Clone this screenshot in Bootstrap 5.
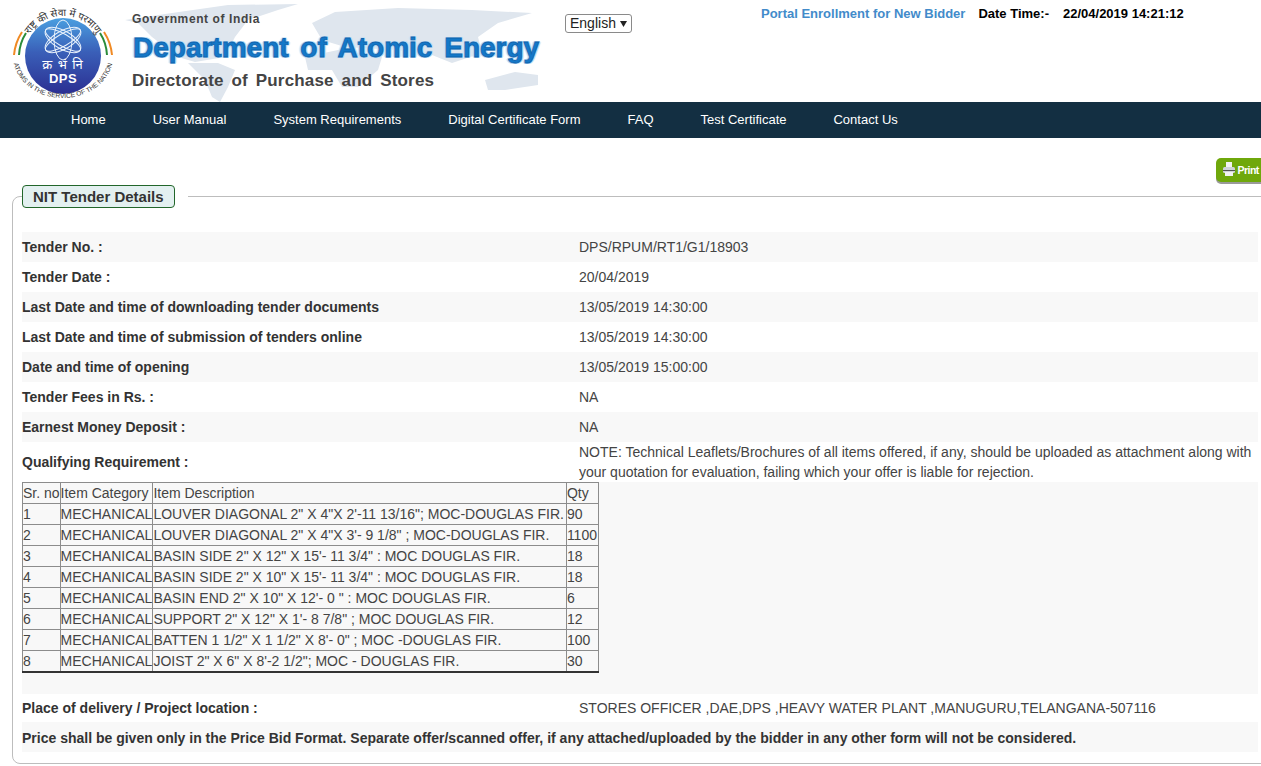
<!DOCTYPE html>
<html lang="en">
<head>
  <meta charset="UTF-8" />
  <meta name="viewport" content="width=device-width, initial-scale=1.0" />
  <title>NIT Tender Details</title>
  <link href="https://cdn.jsdelivr.net/npm/bootstrap@5.3.0/dist/css/bootstrap.min.css" rel="stylesheet" />
  <style>
    body { font-family: "Liberation Sans", Arial, sans-serif; font-size: 14px; color: #333; overflow-x: hidden; }
    .top-head { height: 102px; }
    .logo-box { width: 130px; padding: 5px 0 0 10px; flex: none; }
    .banner { width: 435px; height: 102px; flex: none; position: relative; }
    .banner-map { position: absolute; left: -20px; top: 0; }
    .banner-text { position: relative; padding-top: 12px; }
    .gov-line { font: bold 12px/14px "Liberation Sans", sans-serif; color: #444; letter-spacing: .6px; margin-left: 2px; }
    .dept-line { font: bold 28px/34px "Liberation Sans", sans-serif; color: #1478c8; word-spacing: 4px; white-space: nowrap; margin: 5px 0 0 3px;
      -webkit-text-stroke: .8px #0f63ad; text-shadow: 1px 1px 0 #b7d9f3, -1px -1px 0 #b7d9f3, 1px -1px 0 #b7d9f3, -1px 1px 0 #b7d9f3, 2px 0 1px #cfe4f6, -2px 0 1px #cfe4f6; }
    .dir-line { font: bold 17px/20px "Liberation Sans", sans-serif; color: #444; letter-spacing: .17px; word-spacing: 3px; margin: 6px 0 0 2px; white-space: nowrap; }
    .lang-box { margin: 13px 0 0 0; flex: none; }
    .lang-box select { font: 14px "Liberation Sans", sans-serif; width: 67px; height: 19px; padding: 0 0 0 4px; color: #222; border: 1px solid #8a8a8a; border-radius: 3px; appearance: none;
      background: #fff url("data:image/svg+xml,%3Csvg xmlns='http://www.w3.org/2000/svg' width='7' height='6'%3E%3Cpath d='M0 0h7L3.5 6z' fill='%23222'/%3E%3C/svg%3E") no-repeat 54px 6px; }
    .top-right { margin: 4px 0 0 129px; font-weight: bold; line-height: 18px; white-space: nowrap; }
    .enroll { color: #428bca; font-size: 13px; text-decoration: none; margin-right: 13px; }
    .date-lbl { font-size: 13px; color: #000; margin-right: 14px; }
    .date-val { font-size: 13px; color: #000; }
    .main-nav { background: #132f42; height: 36px; padding-left: 71px; gap: 47px; }
    .main-nav a { color: #fff; text-decoration: none; font-size: 13px; line-height: 35px; }
    .print-bar { height: 47px; padding-top: 20px; }
    .print-btn { width: 60px; height: 24px; margin-right: -15px; background: #6fa80b; color: #fff; border: 0; border-radius: 5px; box-shadow: 0 2px 0 #9a9a9a; font: bold 10.5px/24px "Liberation Sans", sans-serif; letter-spacing: -.5px; padding: 0 0 0 7px; text-align: left; }
    .nit-box { margin: 0 -40px 0 12px; padding: 0 0 11px 9px; border: 1px solid #bdbdbd; border-radius: 8px; min-height: 570px; }
    .nit-box legend { float: none; width: auto; margin: 0; padding: 0 13px 0 0; line-height: 1; font-size: 15px; }
    .legend-tag { display: block; padding: 1px 10px 0 10px; font-weight: bold; line-height: 20px; color: #333; background: #e3f0f0; border: 1px solid #22662a; border-radius: 4px; }
    .rows-wrap { width: 1236px; padding-top: 24px; }
    .info-row { min-height: 30px; align-items: center; }
    .info-row:nth-child(odd) { background: #f8f8f8; }
    .row-lbl { width: 557px; flex: none; font-weight: bold; }
    .row-val { flex: 1; line-height: 20px; color: #444; }
    .note-row { height: 40px; }
    .delivery-row { height: 28px; min-height: 28px; }
    .table-row { height: 212px; align-items: flex-start; }
    .last-row { padding-top: 2px; }
    .item-tbl { border-collapse: collapse; border: 1px solid #333; border-bottom-width: 2px; line-height: 19px; color: #444; }
    .item-tbl td { border: 1px solid #8c8c8c; padding: 0; white-space: nowrap; height: 21px; }
    .item-tbl td:nth-child(3) { padding-right: 2px; }
    .item-tbl td:nth-child(4) { padding-right: 1px; }
    .item-tbl tr:last-child td { height: 20px; padding-top: 1px; }
  </style>
</head>
<body>

<!-- Header -->
<div class="top-head d-flex">
  <div class="logo-box">
    <svg width="106" height="97" viewBox="0 0 106 97">
      <defs>
        <linearGradient id="discFill" x1="0" y1="0" x2="0" y2="1">
          <stop offset="0" stop-color="#4a9fe0" />
          <stop offset=".45" stop-color="#3a5fb8" />
          <stop offset="1" stop-color="#2b2f92" />
        </linearGradient>
        <path id="arcTop" d="M13 51 A40 40 0 0 1 93 51" />
        <path id="arcBottom" d="M3 51 A50 42 0 0 0 103 51" />
      </defs>
      <path d="M4 50 A50 50 0 0 1 12 27" fill="none" stroke="#f08a24" stroke-width="2" />
      <path d="M9 50 A45 45 0 0 1 16 28" fill="none" stroke="#2b8c3a" stroke-width="2" />
      <path d="M102 50 A50 50 0 0 0 94 27" fill="none" stroke="#f08a24" stroke-width="2" />
      <path d="M97 50 A45 45 0 0 0 90 28" fill="none" stroke="#2b8c3a" stroke-width="2" />
      <circle cx="53" cy="51" r="38" fill="url(#discFill)" />
      <g fill="none" stroke="#e8f1fb" stroke-width="1">
        <ellipse cx="53" cy="35" rx="9" ry="20" />
        <ellipse cx="53" cy="35" rx="9" ry="20" transform="rotate(60 53 35)" />
        <ellipse cx="53" cy="35" rx="9" ry="20" transform="rotate(120 53 35)" />
        <ellipse cx="53" cy="35" rx="20" ry="6" transform="rotate(30 53 35)" />
        <ellipse cx="53" cy="35" rx="20" ry="6" transform="rotate(150 53 35)" />
      </g>
      <text font-family="'Noto Sans','Liberation Sans',sans-serif" font-size="10" fill="#333"><textPath href="#arcTop" startOffset="50%" text-anchor="middle">राष्ट्र की सेवा में परमाणु</textPath></text>
      <text font-family="'Liberation Sans',sans-serif" font-size="6.6" fill="#333" text-anchor="middle"><textPath href="#arcBottom" startOffset="50%">ATOMS IN THE SERVICE OF THE NATION</textPath></text>
      <text x="53" y="64" font-family="'Noto Sans','Liberation Sans',sans-serif" font-size="13" letter-spacing="1" fill="#fff" text-anchor="middle">क्र भं नि</text>
      <text x="53" y="78" font-family="'Liberation Sans',sans-serif" font-weight="bold" font-size="13" letter-spacing=".5" fill="#fff" text-anchor="middle">DPS</text>
    </svg>
  </div>
  <div class="banner">
    <svg class="banner-map" width="440" height="102" viewBox="0 0 440 102">
      <g fill="#dfe6ee">
        <path d="M15 20 L62 13 L118 5 L188 4 L168 10 L138 20 L125 37 L115 57 L85 62 L68 57 L42 37 L28 23 Z" />
        <path d="M78 63 L108 63 L125 70 L118 87 L110 102 L102 97 L95 80 Z" />
        <path d="M202 23 L225 12 L288 8 L362 10 L422 13 L388 23 L368 37 L372 53 L342 63 L322 55 L288 50 L235 47 L212 40 Z" />
        <path d="M195 57 L228 50 L272 57 L268 70 L248 87 L232 87 L222 70 L198 70 Z" />
        <path d="M375 80 L405 72 L428 75 L428 85 L395 90 L378 90 Z" />
      </g>
    </svg>
    <div class="banner-text">
      <div class="gov-line">Government of India</div>
      <div class="dept-line">Department of Atomic Energy</div>
      <div class="dir-line">Directorate of Purchase and Stores</div>
    </div>
  </div>
  <div class="lang-box"><select aria-label="Language"><option>English</option></select></div>
  <div class="top-right">
    <a class="enroll" href="#">Portal Enrollment for New Bidder</a><span class="date-lbl">Date Time:-</span><span class="date-val">22/04/2019 14:21:12</span>
  </div>
</div>

<!-- Navbar -->
<nav class="main-nav d-flex">
  <a href="#">Home</a>
  <a href="#">User Manual</a>
  <a href="#">System Requirements</a>
  <a href="#">Digital Certificate Form</a>
  <a href="#">FAQ</a>
  <a href="#">Test Certificate</a>
  <a href="#">Contact Us</a>
</nav>

<div class="print-bar d-flex justify-content-end">
  <button class="print-btn" type="button">
    <svg width="12" height="15" viewBox="0 0 12 15" style="vertical-align:-3px">
      <rect x="3" y="0" width="6" height="5" fill="#f2f2f2" />
      <rect x="0" y="5" width="12" height="6" rx="1.5" fill="#cfd3d8" />
      <rect x="0" y="8" width="12" height="1" fill="#555" />
      <rect x="2" y="10" width="8" height="4" fill="#f2f2f2" />
    </svg> Print
  </button>
</div>

<!-- Tender details -->
<fieldset class="nit-box">
  <legend><span class="legend-tag">NIT Tender Details</span></legend>
  <div class="rows-wrap">
    <div class="info-row d-flex"><div class="row-lbl">Tender No. :</div><div class="row-val">DPS/RPUM/RT1/G1/18903</div></div>
    <div class="info-row d-flex"><div class="row-lbl">Tender Date :</div><div class="row-val">20/04/2019</div></div>
    <div class="info-row d-flex"><div class="row-lbl">Last Date and time of downloading tender documents</div><div class="row-val">13/05/2019 14:30:00</div></div>
    <div class="info-row d-flex"><div class="row-lbl">Last Date and time of submission of tenders online</div><div class="row-val">13/05/2019 14:30:00</div></div>
    <div class="info-row d-flex"><div class="row-lbl">Date and time of opening</div><div class="row-val">13/05/2019 15:00:00</div></div>
    <div class="info-row d-flex"><div class="row-lbl">Tender Fees in Rs. :</div><div class="row-val">NA</div></div>
    <div class="info-row d-flex"><div class="row-lbl">Earnest Money Deposit :</div><div class="row-val">NA</div></div>
    <div class="info-row note-row d-flex"><div class="row-lbl">Qualifying Requirement :</div><div class="row-val">NOTE: Technical Leaflets/Brochures of all items offered, if any, should be uploaded as attachment along with your quotation for evaluation, failing which your offer is liable for rejection.</div></div>
    <div class="info-row table-row d-flex">
      <table class="item-tbl">
        <tr><td>Sr. no</td><td>Item Category</td><td>Item Description</td><td>Qty</td></tr>
        <tr><td>1</td><td>MECHANICAL</td><td>LOUVER DIAGONAL 2" X 4"X 2'-11 13/16"; MOC-DOUGLAS FIR.</td><td>90</td></tr>
        <tr><td>2</td><td>MECHANICAL</td><td>LOUVER DIAGONAL 2" X 4"X 3'- 9 1/8" ; MOC-DOUGLAS FIR.</td><td>1100</td></tr>
        <tr><td>3</td><td>MECHANICAL</td><td>BASIN SIDE 2" X 12" X 15'- 11 3/4" : MOC DOUGLAS FIR.</td><td>18</td></tr>
        <tr><td>4</td><td>MECHANICAL</td><td>BASIN SIDE 2" X 10" X 15'- 11 3/4" : MOC DOUGLAS FIR.</td><td>18</td></tr>
        <tr><td>5</td><td>MECHANICAL</td><td>BASIN END 2" X 10" X 12'- 0 " : MOC DOUGLAS FIR.</td><td>6</td></tr>
        <tr><td>6</td><td>MECHANICAL</td><td>SUPPORT 2" X 12" X 1'- 8 7/8" ; MOC DOUGLAS FIR.</td><td>12</td></tr>
        <tr><td>7</td><td>MECHANICAL</td><td>BATTEN 1 1/2" X 1 1/2" X 8'- 0" ; MOC -DOUGLAS FIR.</td><td>100</td></tr>
        <tr><td>8</td><td>MECHANICAL</td><td>JOIST 2" X 6" X 8'-2 1/2"; MOC - DOUGLAS FIR.</td><td>30</td></tr>
      </table>
    </div>
    <div class="info-row delivery-row d-flex"><div class="row-lbl">Place of delivery / Project location :</div><div class="row-val">STORES OFFICER ,DAE,DPS ,HEAVY WATER PLANT ,MANUGURU,TELANGANA-507116</div></div>
    <div class="info-row last-row d-flex"><strong>Price shall be given only in the Price Bid Format. Separate offer/scanned offer, if any attached/uploaded by the bidder in any other form will not be considered.</strong></div>
  </div>
</fieldset>

<script src="https://cdn.jsdelivr.net/npm/bootstrap@5.3.0/dist/js/bootstrap.bundle.min.js"></script>
</body>
</html>
